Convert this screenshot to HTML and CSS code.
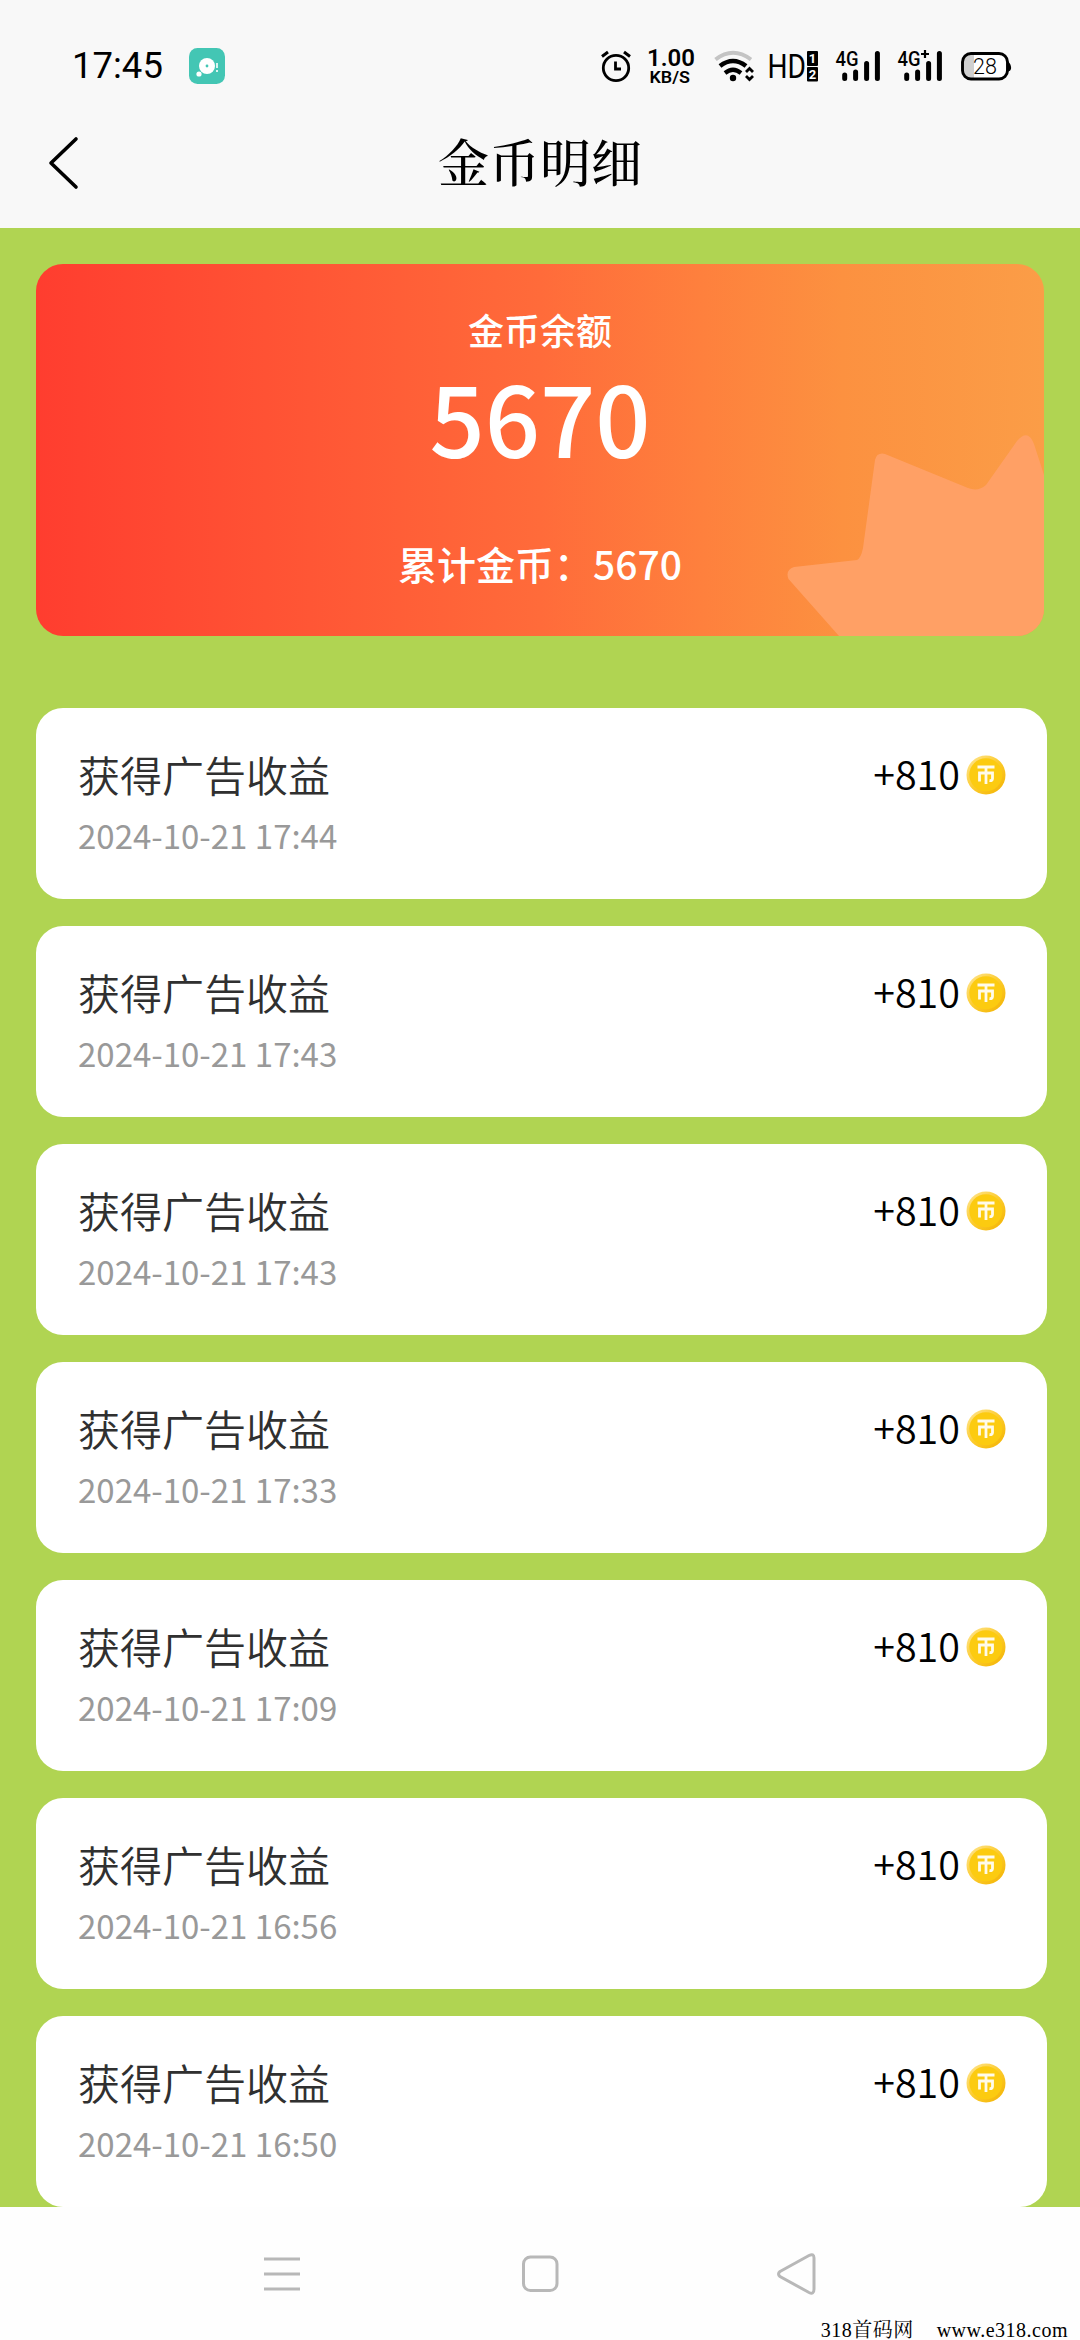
FILE: index.html
```html
<!DOCTYPE html>
<html lang="zh-CN">
<head>
<meta charset="utf-8">
<title>金币明细</title>
<link rel="stylesheet" href="styles.css">
</head>
<body>
<svg width="0" height="0" class="defs">
  <defs>
    <linearGradient id="gold" x1="0" y1="0" x2="1" y2="1">
      <stop offset="0" stop-color="#ffe79a"/><stop offset=".5" stop-color="#fccb2c"/><stop offset="1" stop-color="#f3b200"/>
    </linearGradient>
    <symbol id="coin" viewBox="0 0 40 40">
      <circle cx="20" cy="20" r="19.500" fill="url(#gold)"/>
      <circle cx="19.800" cy="19.800" r="16.500" fill="#fccb10"/>
      <path d="M11.500 12H28.500M13.500 26.500V18H26.500V23.500Q26.500 26 23.500 25.500M20 12V29" fill="none" stroke="#fffbea" stroke-width="2.800"/>
    </symbol>
    <symbol id="bars" viewBox="0 0 38 30">
      <path d="M2.700 24v3.500M13.600 21v6.500M24.600 12.500v15M35.400 2.500v25" stroke="#000" stroke-width="5" stroke-linecap="round"/>
    </symbol>
  </defs>
</svg>
<div class="screen">
  <header class="top">
    <div class="status">
      <span class="time">17:45</span>
      <svg class="app" width="36" height="36" viewBox="0 0 36 36"><rect width="36" height="36" rx="8.500" fill="#43c6b4"/><circle cx="18" cy="18" r="8" fill="#fff"/><circle cx="10" cy="26" r="2.600" fill="#fff"/><circle cx="18" cy="18" r="1.400" fill="#43c6b4"/><path d="M28 15v5M28 22v2" stroke="#fff" stroke-width="1.600"/></svg>
      <svg class="icons" width="416" height="40" viewBox="598 46 416 40">
        <g fill="none" stroke="#000">
          <circle cx="616" cy="68" r="12.700" stroke-width="2.800"/>
          <path d="M615.500 61.500V69H621" stroke-width="2.800"/>
          <path d="M602 56.500L608 52M624 52L630 56.500" stroke-width="3"/>
          <path d="M715.500 59.500Q733 46 751 59.500" stroke="#c4c4c4" stroke-width="4"/>
          <path d="M720 66Q733 56 746 66" stroke-width="4.600"/>
          <path d="M725 73Q733 66.500 741 73" stroke-width="4.200"/>
          <path d="M746 72L749.500 68.500L753 72M746 76L749.500 79.500L753 76" stroke-width="2.800"/>
        </g>
        <circle cx="733" cy="78" r="3.200"/>
        <g font-family="Roboto, sans-serif">
          <text x="647" y="66" font-size="23" font-weight="600" textLength="48" lengthAdjust="spacingAndGlyphs">1.00</text>
          <text x="649.500" y="83" font-size="17" font-weight="600" textLength="40.500" lengthAdjust="spacingAndGlyphs">KB/S</text>
          <text x="767.500" y="78" font-size="33.500" textLength="38.500" lengthAdjust="spacingAndGlyphs">HD</text>
          <text x="835.500" y="66" font-size="20.500" font-weight="500" textLength="23" lengthAdjust="spacingAndGlyphs">4G</text>
          <text x="897.500" y="66" font-size="20.500" font-weight="500" textLength="23" lengthAdjust="spacingAndGlyphs">4G</text>
        </g>
        <rect x="807" y="51" width="11" height="15" rx="1"/><rect x="807" y="67" width="11" height="14.500" rx="1"/>
        <g font-family="Roboto, sans-serif" fill="#fff" font-size="13" font-weight="700" text-anchor="middle"><text x="812.500" y="63">1</text><text x="812.500" y="79">2</text></g>
        <use href="#bars" x="842" y="51" width="38" height="30"/>
        <use href="#bars" x="904" y="51" width="38" height="30"/>
        <path d="M921 54H929M925 50V58" stroke="#000" stroke-width="2.200"/>
        <rect x="962.500" y="53.500" width="45" height="25.500" rx="8.500" fill="#fff"/>
        <path d="M974 54H970Q963 54 963 62V71Q963 79 970 79H974Z" fill="#d0d0d0"/>
        <rect x="962.500" y="53.500" width="45" height="25.500" rx="8.500" fill="none" stroke="#000" stroke-width="2.900"/>
        <path d="M1008 61.500Q1011.500 64 1011 69Q1010.500 71 1008 71.500Z"/>
        <text x="985" y="73.500" font-family="Roboto, sans-serif" font-size="21.500" font-weight="350" text-anchor="middle">28</text>
      </svg>
    </div>
    <div class="titlebar">
      <svg width="32" height="54" viewBox="0 0 32 54" fill="none" stroke="#000" stroke-width="3.600" stroke-linecap="round" stroke-linejoin="round"><path d="M28 3L3 27L28 51"/></svg>
      <h1>金币明细</h1>
    </div>
  </header>
  <main>
    <section class="balance">
      <svg class="star" width="258" height="204" viewBox="0 0 258 204"><path d="M53 204L2.500 147Q-1 138 8 135L71 128Q75 126 77 116L89 28Q91 20 99 22L182 56Q192 60 200 53L231 9Q242-4 248 12L258 43V204Z" fill="#ffa065"/></svg>
      <div class="caption">金币余额</div>
      <div class="amount">5670</div>
      <div class="total">累计金币：5670</div>
    </section>
    <ul class="list">
      <li><div><div class="name">获得广告收益</div><time>2024-10-21 17:44</time></div><div class="gain"><span>+810</span><svg width="40" height="40"><use href="#coin"/></svg></div></li>
      <li><div><div class="name">获得广告收益</div><time>2024-10-21 17:43</time></div><div class="gain"><span>+810</span><svg width="40" height="40"><use href="#coin"/></svg></div></li>
      <li><div><div class="name">获得广告收益</div><time>2024-10-21 17:43</time></div><div class="gain"><span>+810</span><svg width="40" height="40"><use href="#coin"/></svg></div></li>
      <li><div><div class="name">获得广告收益</div><time>2024-10-21 17:33</time></div><div class="gain"><span>+810</span><svg width="40" height="40"><use href="#coin"/></svg></div></li>
      <li><div><div class="name">获得广告收益</div><time>2024-10-21 17:09</time></div><div class="gain"><span>+810</span><svg width="40" height="40"><use href="#coin"/></svg></div></li>
      <li><div><div class="name">获得广告收益</div><time>2024-10-21 16:56</time></div><div class="gain"><span>+810</span><svg width="40" height="40"><use href="#coin"/></svg></div></li>
      <li><div><div class="name">获得广告收益</div><time>2024-10-21 16:50</time></div><div class="gain"><span>+810</span><svg width="40" height="40"><use href="#coin"/></svg></div></li>
    </ul>
  </main>
  <footer class="nav">
    <svg width="40" height="44" viewBox="0 0 40 44"><path d="M2 7H38M2 22H38M2 37H38"/></svg>
    <svg width="40" height="44" viewBox="0 0 40 44"><rect x="3.500" y="5" width="33.500" height="33.500" rx="7"/></svg>
    <svg width="40" height="44" viewBox="0 0 40 44"><path d="M3 19.500L32 3.500Q37 1 37 6V37Q37 43 32 40.500L3 24.500Q0 22 3 19.500Z"/></svg>
    <div class="mark"><span>318首码网</span><span>www.e318.com</span></div>
  </footer>
</div>
</body>
</html>
```
FILE: styles.css
```css
* { box-sizing: border-box; }
body { margin: 0; font-family: "Noto Sans CJK SC", sans-serif; color: #000; }
.defs { position: absolute; }
.screen { width: 1080px; height: 2340px; display: flex; flex-direction: column; overflow: hidden; background: #b0d452; }
.top { height: 228px; flex: none; background: #f8f8f8; }
.status { height: 98px; padding: 34px 66px 0 72px; display: flex; align-items: center; }
.time { width: 117px; font: 36.5px/64px Roboto, sans-serif; white-space: nowrap; }
.icons { margin-left: auto; }
.titlebar { height: 130px; display: grid; grid-template-columns: 200px 1fr 200px; align-items: center; }
.titlebar svg { margin: 0 0 0 48px; }
h1 { margin: 0; padding-bottom: 6px; text-align: center; font: 500 51px/70px "Noto Serif CJK SC", "Noto Serif SC", "Source Han Serif SC", "AR PL UMing CN", "Noto Sans CJK SC", serif; }
main { flex: 1; min-height: 0; overflow: hidden; padding: 36px 33px 0 36px; }
.balance { position: relative; width: 1008px; height: 372px; border-radius: 27px; overflow: hidden; background: linear-gradient(90deg, #ff3d2f, #ff6b3a 50%, #fe803d 66%, #fc9140 80%, #fb9d47); color: #fff; text-align: center; font-weight: 500; padding-top: 37px; }
.star { position: absolute; right: 0; bottom: 0; }
.caption { position: relative; font-size: 36px; line-height: 56px; }
.amount { position: relative; font-size: 97px; line-height: 118px; }
.total { position: relative; font-size: 39px; line-height: 58px; margin-top: 59px; }
.list { list-style: none; margin: 72px 0 0; padding: 0; display: flex; flex-direction: column; gap: 27px; }
.list li { height: 191px; flex: none; border-radius: 27px; background: #fff; padding: 35px 41px 0 42px; display: flex; justify-content: space-between; align-items: flex-start; }
.name { font-size: 42px; line-height: 62px; font-weight: 350; color: #303030; }
time { display: block; font-size: 33px; line-height: 60px; color: #999; }
.gain { display: flex; align-items: flex-start; gap: 6px; font-size: 39.5px; line-height: 60px; font-weight: 350; }
.gain svg { margin-top: 12px; }
.nav { position: relative; flex: none; height: 133px; background: #fefefe; padding: 45px 263px 0 262px; display: flex; justify-content: space-between; align-items: flex-start; }
.nav svg { fill: none; stroke: #b8b8b8; stroke-width: 3; }
.mark { position: absolute; right: 12px; bottom: 0; display: flex; gap: 23px; font: 20px/20px "Liberation Serif", "Noto Serif CJK SC", "Noto Serif SC", serif; letter-spacing: .5px; }
```
